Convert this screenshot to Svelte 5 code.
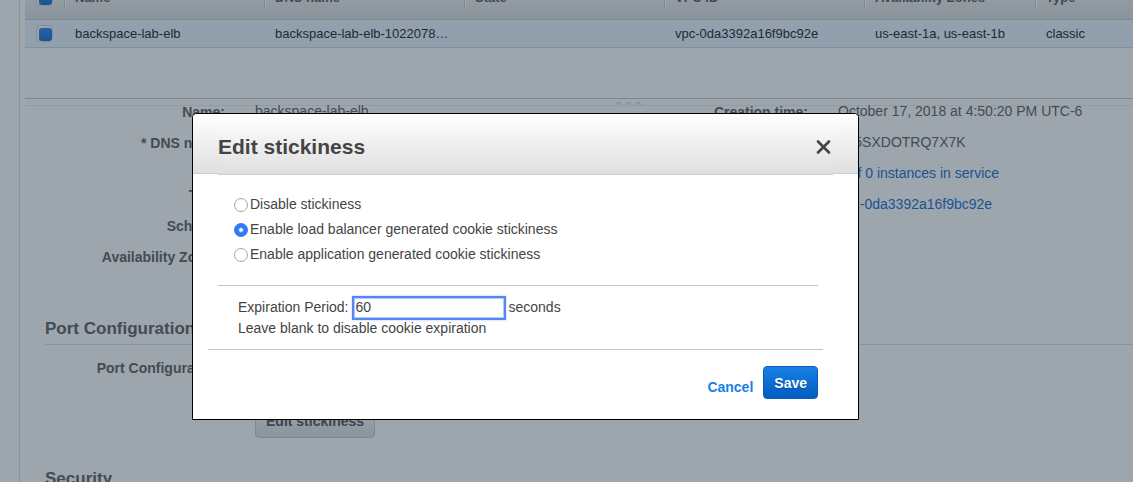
<script>
  const columns = ['Name', 'DNS name', 'State', 'VPC ID', 'Availability Zones', 'Type'];
  const row = ['backspace-lab-elb', 'backspace-lab-elb-1022078…', '', 'vpc-0da3392a16f9bc92e', 'us-east-1a, us-east-1b', 'classic'];
  const options = [
    { value: 'none', label: 'Disable stickiness' },
    { value: 'lb', label: 'Enable load balancer generated cookie stickiness' },
    { value: 'app', label: 'Enable application generated cookie stickiness' },
  ];
  let mode = $state('lb');
  let period = $state('60');
</script>

<div class="page">
  <main class="panel">
    <table>
      <colgroup>
        <col class="c-check" /><col class="c-wide" /><col class="c-wide" /><col class="c-wide" />
        <col class="c-wide" /><col class="c-zones" /><col />
      </colgroup>
      <thead>
        <tr>
          <th><input class="tick" type="checkbox" checked aria-label="Select all load balancers" /></th>
          {#each columns as name}<th>{name}</th>{/each}
        </tr>
      </thead>
      <tbody>
        <tr>
          <td><input class="tick" type="checkbox" checked aria-label="Select backspace-lab-elb" /></td>
          {#each row as cell}<td>{cell}</td>{/each}
        </tr>
      </tbody>
    </table>

    <div class="splitter"><i></i><i></i><i></i></div>

    <section class="details">
      <dl>
        <dt>Name:</dt><dd>backspace-lab-elb</dd>
        <dt>* DNS name:</dt><dd>backspace-lab-elb-1022078<br />(A Record)</dd>
        <dt>Type:</dt><dd>Classic</dd>
        <dt>Scheme:</dt><dd>internet-facing</dd>
        <dt>Availability Zones:</dt><dd>us-east-1a, us-east-1b</dd>
      </dl>
      <dl class="right">
        <dt>Creation time:</dt><dd>October 17, 2018 at 4:50:20 PM UTC-6</dd>
        <dt>Hosted zone:</dt><dd>Z35SXDOTRQ7X7K</dd>
        <dt>Status:</dt><dd><a href="#status">0 of 0 instances in service</a></dd>
        <dt>VPC:</dt><dd><a href="#vpc">vpc-0da3392a16f9bc92e</a></dd>
      </dl>
    </section>

    <section class="group">
      <h3>Port Configuration</h3>
      <dl>
        <dt>Port Configuration:</dt><dd>80 (HTTP)</dd>
      </dl>
      <button class="grey" type="button">Edit stickiness</button>
    </section>

    <section class="group">
      <h3>Security</h3>
    </section>
  </main>

  <div class="overlay">
    <form class="dialog" role="dialog" aria-labelledby="title" onsubmit={(e) => e.preventDefault()}>
      <header>
        <div class="bar">
          <h2 id="title">Edit stickiness</h2>
          <button class="close" type="button" aria-label="Close">
            <svg width="16" height="16" viewBox="0 0 16 16"><path d="M2 2.5L13 13.5M13 2.5L2 13.5" fill="none" stroke="#444" stroke-width="2.6" stroke-linecap="round" /></svg>
          </button>
        </div>
      </header>

      <div class="options">
        {#each options as o}
          <label><input type="radio" name="mode" value={o.value} bind:group={mode} />{o.label}</label>
        {/each}
      </div>

      <div class="expiry">
        <div class="line">
          <label for="period">Expiration Period:</label>
          <input id="period" type="text" bind:value={period} />
          <span>seconds</span>
        </div>
        <p>Leave blank to disable cookie expiration</p>
      </div>

      <footer>
        <button class="cancel" type="button">Cancel</button>
        <button class="save" type="submit">Save</button>
      </footer>
    </form>
  </div>
</div>

<style>
  :global(body) {
    background: #9da5ad;
  }
  .page {
    position: relative;
    height: 100vh;
    overflow: hidden;
    box-sizing: border-box;
    padding-left: 19px;
    font: 14px/21px "Liberation Sans", Arial, sans-serif;
    color: #434b53;
    background: #9da5ad;
  }
  .page *,
  .page *::before {
    box-sizing: border-box;
  }
  .panel {
    margin-top: -12px;
    padding-left: 5px;
    border-left: 1px solid #8a929a;
  }
  h2, h3, p, dl, dd {
    margin: 0;
  }
  button {
    font: bold 14px/21px "Liberation Sans", Arial, sans-serif;
    cursor: pointer;
  }

  table {
    width: 100%;
    table-layout: fixed;
    border-collapse: separate;
    border-spacing: 0;
    font-size: 13px;
    line-height: 19px;
  }
  .c-check { width: 40px; }
  .c-wide { width: 200px; }
  .c-zones { width: 171px; }
  th, td {
    padding: 0 10px;
    text-align: left;
    white-space: nowrap;
  }
  th {
    position: relative;
    height: 32px;
    padding-bottom: 12px;
    color: #434a51;
    background: linear-gradient(#979fa7, #8c949b);
    border-bottom: 1px solid #7d878f;
  }
  th:not(:first-child)::before {
    content: "";
    position: absolute;
    left: -1px;
    top: 0;
    width: 2px;
    height: 19px;
    background: linear-gradient(90deg, #7d858d 50%, #a3abb3 50%);
  }
  td {
    height: 28px;
    color: #212a32;
    background: #929fad;
    border-bottom: 1px solid #83919c;
  }
  .tick {
    appearance: none;
    display: block;
    width: 17px;
    height: 17px;
    margin: 0 0 0 1px;
    border: 1px solid #858d95;
    border-radius: 5px;
    background: #9ba3ab;
    padding: 2px 0 0 2px;
  }
  .tick:checked::before {
    content: "";
    display: block;
    width: 13px;
    height: 13px;
    border-radius: 3px;
    background: linear-gradient(#2463a3, #1b5391);
  }

  .splitter {
    display: flex;
    justify-content: center;
    gap: 5px;
    height: 8px;
    margin-top: 50px;
    padding: 3px 0 0 99px;
    border-top: 1px solid #7f878f;
    border-bottom: 1px solid #929aa2;
    overflow: hidden;
  }
  .splitter i {
    width: 5px;
    height: 6px;
    border: 1px solid #7d858d;
    border-radius: 3px;
  }

  .details {
    display: grid;
    grid-template-columns: 583px 1fr;
    margin-top: -5px;
  }
  dl {
    display: grid;
    grid-template-columns: 200px 1fr;
    column-gap: 30px;
    row-gap: 10px;
    align-content: start;
  }
  dt {
    font-weight: bold;
    text-align: right;
  }
  .details dt {
    padding-top: 1px;
    margin-bottom: -1px;
  }
  .panel a {
    color: #1b5390;
    text-decoration: none;
  }
  .group {
    margin: 50px 0 0 20px;
  }
  .group h3 {
    font-size: 17px;
    line-height: 24px;
    padding-bottom: 3px;
    border-bottom: 1px solid #8a929a;
  }
  .group dl {
    grid-template-columns: 180px 1fr;
    margin-top: 13px;
  }
  .grey {
    display: block;
    height: 33px;
    margin: 26px 0 -21px 210px;
    padding: 0 10px;
    color: #3c444c;
    background: linear-gradient(#9da5ad, #8c949b);
    border: 1px solid #7f878f;
    border-radius: 4px;
  }

  .overlay {
    position: absolute;
    inset: 0;
    padding: 113px 274px 0 192px;
  }
  .dialog {
    color: #444;
    background: #fff;
    border: 1px solid #000;
    border-radius: 5px 5px 0 0;
  }
  header {
    height: 60px;
    padding: 0 25px;
    border-bottom: 1px solid #ccc;
    border-radius: 4px 4px 0 0;
    background: linear-gradient(#fff, #dfdfdf);
  }
  .bar {
    display: flex;
    align-items: center;
    justify-content: space-between;
    height: 61px;
    padding-bottom: 1px;
    padding-right: 1px;
    border-bottom: 1px solid #ccc;
    background: linear-gradient(#fff, #dfdfdf);
  }
  h2 {
    font-size: 21px;
    line-height: 28px;
    padding-top: 6px;
  }
  .close {
    display: flex;
    margin-top: 6px;
    padding: 0;
    border: 0;
    background: none;
  }
  .options {
    display: grid;
    row-gap: 4px;
    margin: 0 40px 0 25px;
    padding: 20px 16px 20px;
    border-bottom: 1px solid #c4c4c4;
  }
  .options label {
    display: flex;
    align-items: center;
    gap: 2px;
  }
  .options input {
    appearance: none;
    width: 14px;
    height: 14px;
    margin: 1px 0 0;
    border: 1px solid #a6a6a6;
    border-radius: 50%;
    background: #fff;
  }
  .options input:checked {
    border-color: #2f7bf6;
    background: radial-gradient(circle, #fff 1px, #2f7bf6 3px);
  }
  .expiry {
    margin: 0 35px 0 15px;
    padding: 11px 30px 10px;
    border-bottom: 1px solid #c4c4c4;
  }
  .line {
    display: flex;
    align-items: center;
    gap: 5px;
  }
  .line input {
    width: 150px;
    height: 20px;
    padding: 0 1px;
    font: inherit;
    color: #444;
    background: #fff;
    border: 1px solid #b5c9f8;
    outline: 0;
    box-shadow: 0 0 0 2px #5586f3, 0 0 2px 2px #a9c1f9;
  }
  footer {
    display: flex;
    justify-content: flex-end;
    align-items: center;
    gap: 10px;
    padding: 16px 40px 20px;
  }
  .cancel {
    padding: 10px 0 0;
    border: 0;
    background: none;
    color: #1a80e4;
  }
  .save {
    height: 33px;
    padding: 1px 10px 0;
    color: #fff;
    text-shadow: 0 1px 1px #004a99;
    background: linear-gradient(#1a80e4, #005cc0);
    border: 1px solid #0a5cb5;
    border-radius: 4px;
  }
</style>
